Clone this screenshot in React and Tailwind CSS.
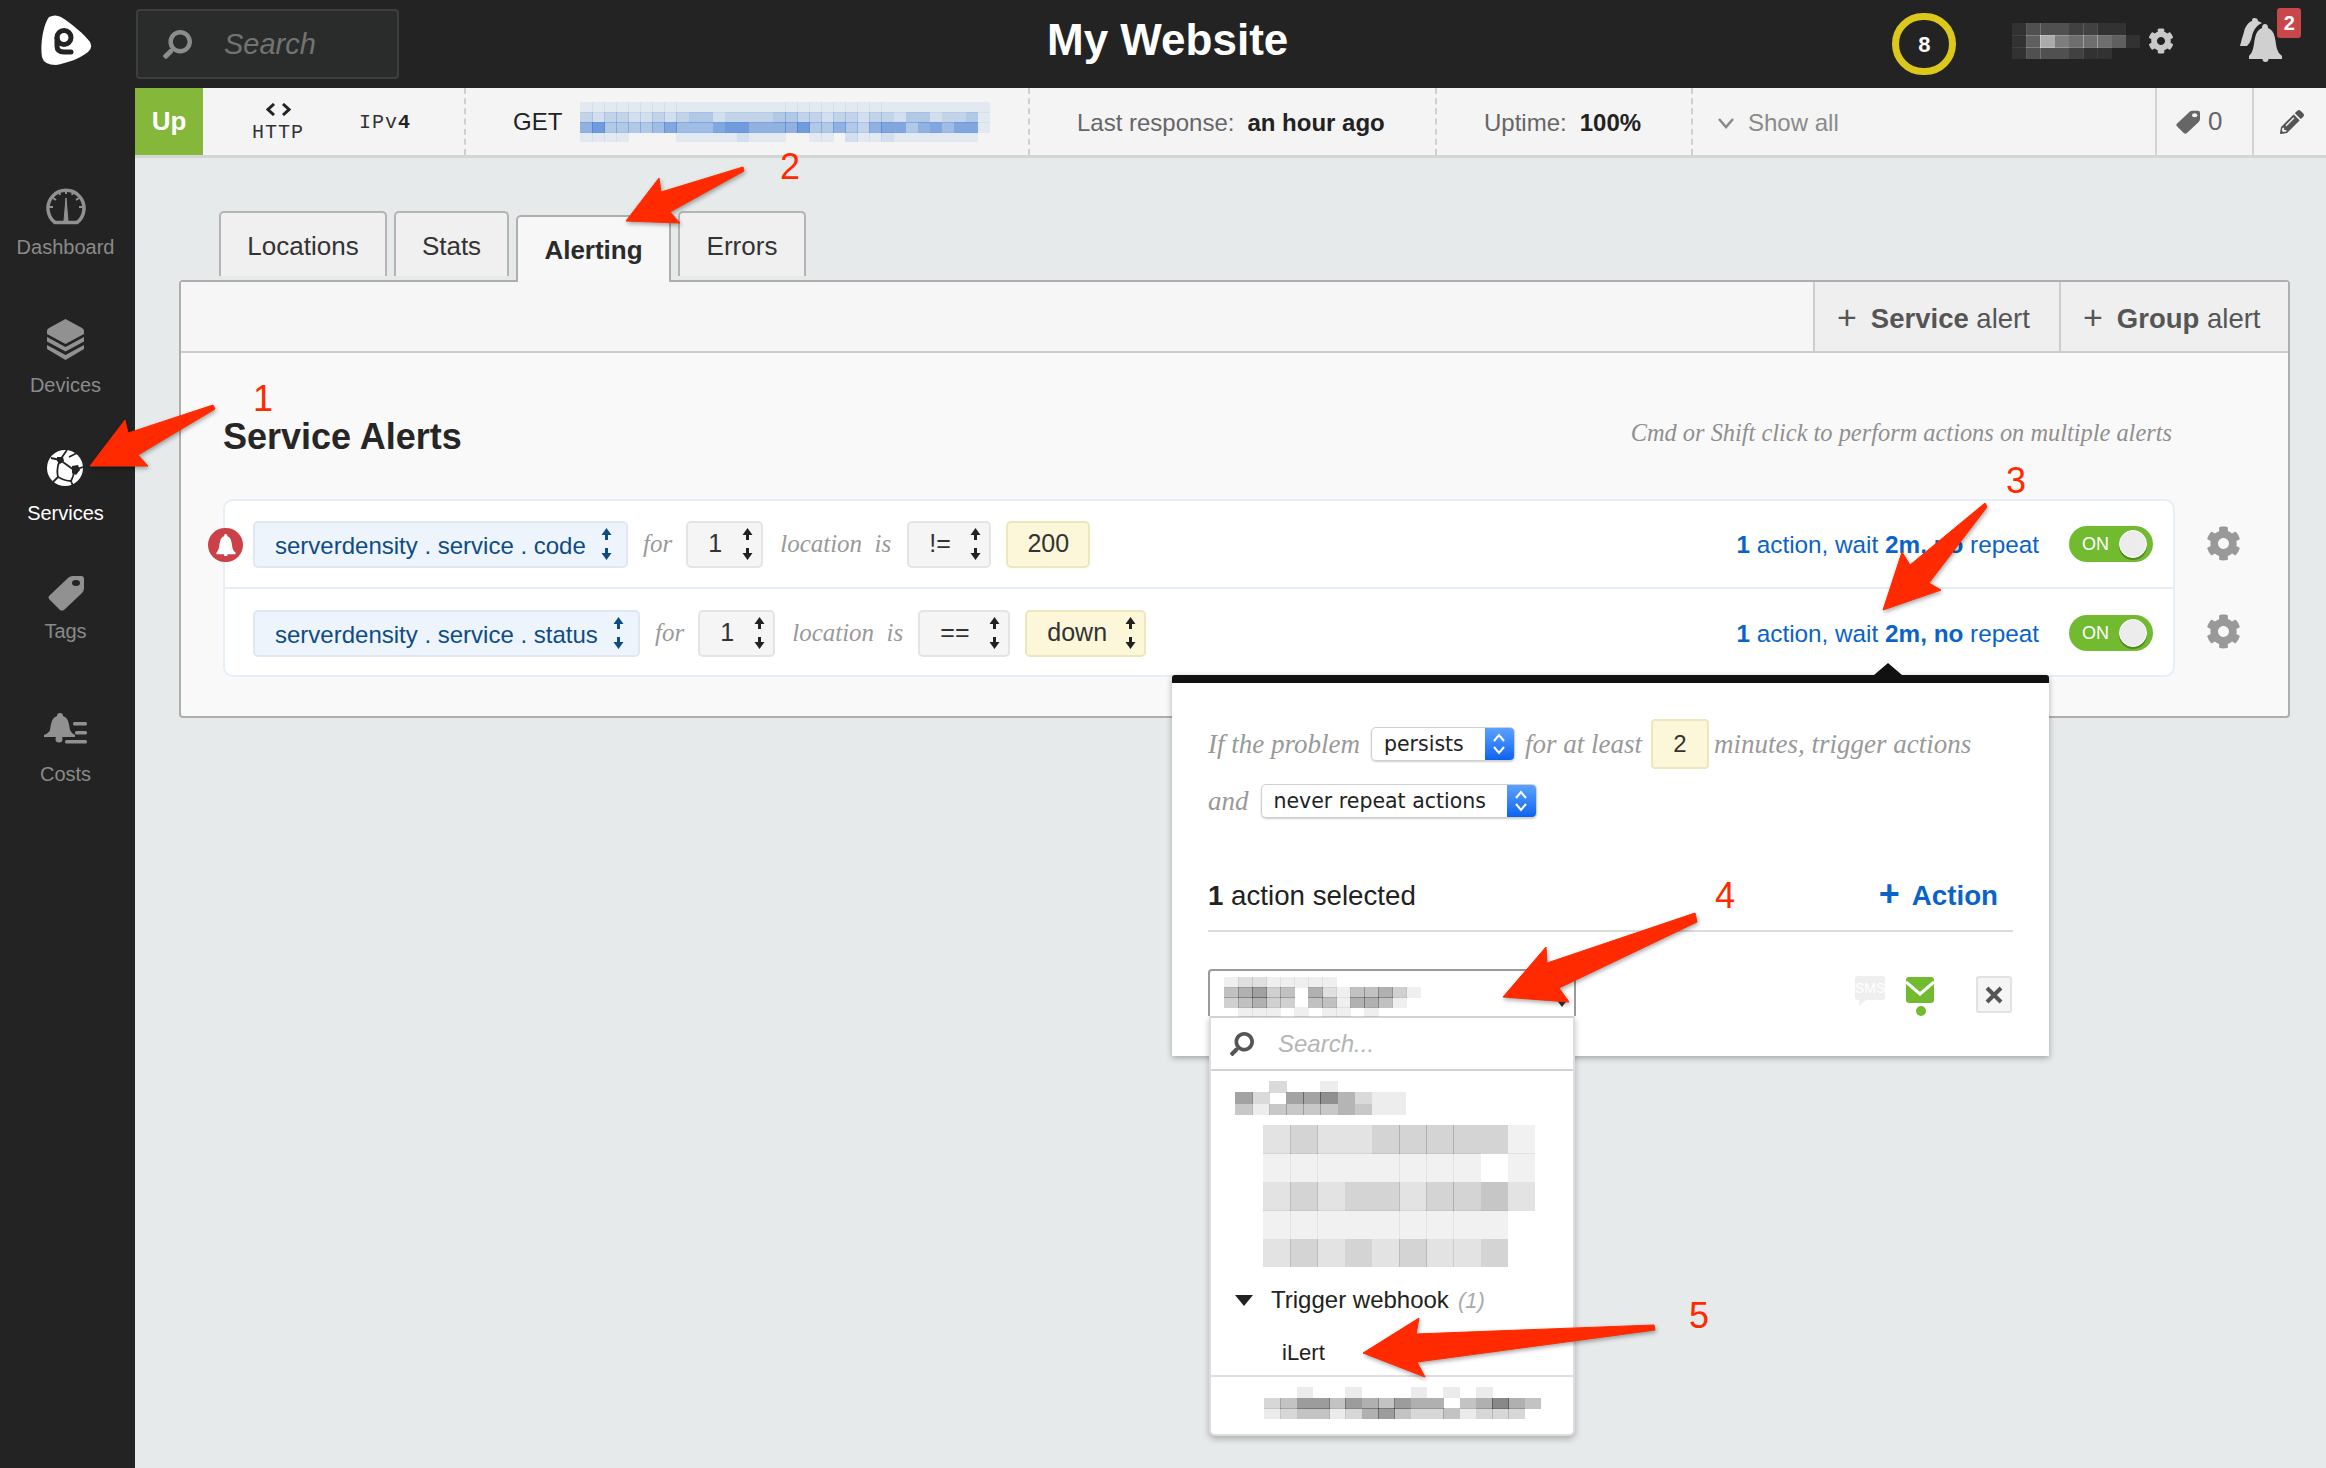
import React from 'react';
import { FaCog, FaSearch, FaPencilAlt } from 'react-icons/fa';

const URL_ROWS = [
  '1111111111111111111111111111111111',
  '3233223234423333443323323324423341',
  '6844445755578866668446436774675771',
  '1111000011111211100110211211111110',
];
const NAME_ROWS = [
  '133322110',
  '149655541',
  '133321100',
];
const SELECT_ROWS = [
  '12211111000000000',
  '45634052144531000',
  '34533044155410000',
  '01110101101000000',
];
const GROUP_ROWS = [
  '00200100000',
  '52055642110',
  '31333343110',
];
const BLOCK_ROWS = [
  '2322333331',
  '1111111101',
  '2323323342',
  '1111111110',
  '2323232230',
];
const FOOT_ROWS = [
  '00100100010101000',
  '23553543544034643',
  '12331245322312220',
];

// pixelated censor blocks, drawn from a table of opacities
const Pix = ({ rows, w, h, color = '#000', max = 0.5 }) => {
  const cw = w / rows[0].length;
  const ch = h / rows.length;
  return (
    <svg width={w} height={h} className="block" shapeRendering="crispEdges">
      {rows.map((r, y) =>
        r.split('').map((v, x) => (
          <rect key={`${x}-${y}`} x={x * cw} y={y * ch} width={cw + 0.5} height={ch + 0.5} fill={color} opacity={(Number(v) / 9) * max} />
        ))
      )}
    </svg>
  );
};

const UpDown = ({ color = '#222', h = 32 }) => (
  <svg width="11" height={h} viewBox={`0 0 11 ${h}`} className="shrink-0">
    <path d={`M5.5 0 L10.5 7 H7 V12 H4 V7 H.5 Z M5.5 ${h} L10.5 ${h - 7} H7 V${h - 12} H4 V${h - 7} H.5 Z`} fill={color} />
  </svg>
);

const DashIcon = () => (
  <svg width="40" height="38" viewBox="0 0 40 38" fill="none" stroke="#919191">
    <path d="M9 35.5 A18 18 0 1 1 31 35.5 Z" strokeWidth="3.5" strokeLinejoin="round" />
    <path d="M20 11 L22 34 H18 Z" fill="#919191" strokeWidth="1" />
    <path d="M20 3 V7 M13 5 L14 8 M27 5 L26 8 M7 11 L10 13 M33 11 L30 13 M3 20 H7 M37 20 H33" strokeWidth="2" />
  </svg>
);

const StackIcon = () => (
  <svg width="37" height="41" viewBox="0 0 37 41" fill="#919191">
    <path d="M18.5 0 L35 9 Q37 10 37 12 V15 L18.5 25 L0 15 V12 Q0 10 2 9 Z" />
    <path d="M0 18 L18.5 28 L37 18 V22.5 L18.5 32.5 L0 22.5 Z" />
    <path d="M0 26 L18.5 36 L37 26 V30 L18.5 41 L0 30 Z" />
  </svg>
);

const BallIcon = () => (
  <svg width="36" height="36" viewBox="0 0 36 36">
    <circle cx="18" cy="18" r="18" fill="#fff" />
    <path d="M13 10 L20 0 M13 10 L4 8 M13 10 Q9 18 11 27 M13 10 L27 20 M27 20 Q27 26 24 31 M11 27 Q18 31 24 31 M11 27 L6 32 M24 31 L26 36 M27 20 L36 17 M22 7 L30 3" fill="none" stroke="#232323" strokeWidth="1.8" />
    <path d="M10 7 L16 7 L17 11 L13 14 L10 11 Z" fill="#232323" />
    <path d="M25 16 L31 15 L33 20 L29 25 L25 23 Z" fill="#232323" />
  </svg>
);

const TagIcon = ({ w = 36, h = 36, color = '#919191', hole = '#232323' }) => (
  <svg width={w} height={h} viewBox="0 0 36 36">
    <path d="M1 21 L20 3 Q22 1 25 1 H33 Q36 1 36 4 V13 Q36 16 34 18 L16 35 Q14 36 12 35 L1 24 Q0 22 1 21 Z" fill={color} />
    <ellipse cx="28" cy="8" rx="4" ry="3" fill={hole} />
  </svg>
);

const CostIcon = () => (
  <svg width="44" height="32" viewBox="0 0 44 32" fill="#919191">
    <path d="M16 0 Q19 0 19 3 C25 5 25 12 26 17 Q27 20 31 22 V24 H0 V22 Q5 20 6 17 C7 12 7 5 13 3 Q13 0 16 0 Z" />
    <circle cx="15" cy="26" r="3.5" />
    <rect x="29" y="9" width="14" height="3.5" rx="1.5" />
    <rect x="31" y="18" width="12" height="3.5" rx="1.5" />
    <rect x="21" y="27" width="22" height="3.5" rx="1.5" />
  </svg>
);

const BellShape = ({ color }) => (
  <path d="M16 0 Q19 0 19 4 C27 7 26 18 28 25 Q29 29 33 32 V35 H0 V32 Q3 29 4 25 C6 18 5 7 13 4 Q13 0 16 0 Z" fill={color} />
);

const Logo = () => (
  <svg width="51" height="50" viewBox="0 0 51 50">
    <path d="M8 2 Q14 -1 20 2 C30 8 44 20 49 27 Q52 33 47 37 C38 44 26 48 15 50 Q3 50 1 42 C-1 30 2 10 8 2 Z" fill="#fff" />
    <circle cx="23" cy="22.5" r="7" fill="none" stroke="#232323" strokeWidth="5" />
    <path d="M16 23 V31 Q16 37 23 37 H30" fill="none" stroke="#232323" strokeWidth="5" strokeLinecap="round" />
  </svg>
);

const NavItem = ({ icon, label, active, iconH, mt, gap }) => (
  <div className={`flex flex-col items-center ${mt}`}>
    <div className={`flex items-center justify-center ${iconH}`}>{icon}</div>
    <span className={`text-[20px] leading-[24px] ${gap} ${active ? 'text-white' : 'text-[#8a8a8a]'}`}>{label}</span>
  </div>
);

const Sidebar = () => (
  <aside className="w-[135px] shrink-0 bg-[#232323] flex flex-col items-center pr-[4px]">
    <div className="mt-[15px] ml-[1px]"><Logo /></div>
    <NavItem icon={<DashIcon />} label="Dashboard" iconH="h-[38px]" mt="mt-[122px]" gap="mt-[10px]" />
    <NavItem icon={<StackIcon />} label="Devices" iconH="h-[41px]" mt="mt-[60px]" gap="mt-[13px]" />
    <NavItem icon={<BallIcon />} label="Services" active iconH="h-[36px]" mt="mt-[53px]" gap="mt-[15px]" />
    <NavItem icon={<TagIcon />} label="Tags" iconH="h-[36px]" mt="mt-[50px]" gap="mt-[8px]" />
    <NavItem icon={<CostIcon />} label="Costs" iconH="h-[32px]" mt="mt-[70px]" gap="mt-[17px]" />
  </aside>
);

const Header = () => (
  <header className="h-[88px] bg-[#232323] flex items-center relative">
    <div className="ml-[1px] w-[263px] h-[70px] rounded-[4px] border-2 border-[#3d3f3f] bg-[#2a2c2c] flex items-center pl-[25px]">
      <FaSearch className="text-[#8c8c8c] -scale-x-100" size={29} />
      <span className="ml-[32px] mt-[2px] italic text-[29px] text-[#737373]">Search</span>
    </div>
    <h1 className="ml-[648px] mt-[-9px] text-[44px] font-bold text-white whitespace-nowrap">My Website</h1>
    <div className="ml-[604px] w-[64px] h-[62px] rounded-full border-[7px] border-[#dcc81a] flex items-center justify-center text-white font-bold text-[22px]">8</div>
    <div className="ml-[56px] mt-[-6px]"><Pix rows={NAME_ROWS} w={128} h={36} color="#fff" max={0.62} /></div>
    <FaCog className="ml-[8px] mt-[-6px] text-[#c9c9c9]" size={26} />
    <div className="relative ml-[65px] mt-[-8px] w-[46px] h-[44px]">
      <svg width="46" height="44" viewBox="0 0 46 44">
        <path d="M15 0 Q19 0 19 3 L23 5 C16 8 14 14 13 18 C12 24 9 27 8 28 H1 Q3 20 5 14 C6 8 10 4 13 3 Q13 0 15 0 Z" fill="#d0d0d0" />
        <g transform="translate(10 6)"><BellShape color="#d0d0d0" /></g>
        <circle cx="26.5" cy="41" r="3" fill="#d0d0d0" />
      </svg>
      <span className="absolute left-[38px] top-[-10px] w-[24px] h-[30px] rounded-[3px] bg-[#c8474a] text-white font-bold text-[20px] leading-[30px] text-center">2</span>
    </div>
  </header>
);

const Sep = ({ className = '' }) => (
  <div className={`w-0 h-full border-l-2 border-dashed border-[#cfcfcf] shrink-0 ${className}`} />
);

const StatusBar = () => (
  <div className="h-[70px] bg-[#f4f4f4] border-b-[3px] border-[#d4d6d6] flex items-stretch text-[24px] text-[#666]">
    <div className="w-[68px] shrink-0 bg-[#84b73a] text-white font-bold text-[26px] flex items-center justify-center">Up</div>
    <div className="w-[261px] shrink-0 flex items-center font-['Liberation_Mono',monospace] text-[#333]">
      <div className="ml-[49px] flex flex-col items-center w-[52px] mt-[3px]">
        <svg width="25" height="13" viewBox="0 0 25 13" fill="none" stroke="#222" strokeWidth="3"><path d="M8 1 L2 6.5 L8 12 M17 1 L23 6.5 L17 12" /></svg>
        <span className="text-[20px] leading-[22px] tracking-[1px] mt-[6px]">HTTP</span>
      </div>
      <span className="ml-[55px] mt-[3px] text-[20px] tracking-[1px]">IPv<b className="text-[#222]">4</b></span>
    </div>
    <Sep />
    <div className="w-[562px] shrink-0 flex items-center">
      <span className="ml-[47px] mt-[1px] text-[#222]">GET</span>
      <div className="ml-[18px]"><Pix rows={URL_ROWS} w={410} h={40} color="#3b78d0" max={0.8} /></div>
    </div>
    <Sep />
    <div className="w-[405px] shrink-0 flex items-center pl-[47px] pt-[2px] whitespace-nowrap">
      <span>Last response:</span>
      <b className="ml-[13px] text-[#222]">an hour ago</b>
    </div>
    <Sep />
    <div className="w-[254px] shrink-0 flex items-center pl-[47px] pt-[2px] whitespace-nowrap">
      <span>Uptime:</span>
      <b className="ml-[13px] text-[#222]">100%</b>
    </div>
    <Sep />
    <div className="flex-1 flex items-center pl-[24px] pt-[2px] text-[#8a8a8a]">
      <svg width="18" height="12" viewBox="0 0 18 12" fill="none" stroke="#8a8a8a" strokeWidth="2.5"><path d="M2 2 L9 10 L16 2" /></svg>
      <span className="ml-[13px]">Show all</span>
    </div>
    <div className="w-[97px] border-l-2 border-[#d4d4d4] flex items-center pl-[19px] text-[#666] text-[26px]">
      <TagIcon w={24} h={24} color="#666" hole="#f4f4f4" />
      <span className="ml-[8px]">0</span>
    </div>
    <div className="w-[74px] border-l-2 border-[#d4d4d4] flex items-center pl-[26px]">
      <FaPencilAlt className="text-[#555]" size={24} />
    </div>
  </div>
);

const Tab = ({ label, width, active }) =>
  active ? (
    <div className={`${width} h-[67px] mt-[4px] pt-[2px] relative z-10 mb-[-6px] rounded-t-[5px] border-2 border-b-0 border-[#aeaeae] bg-[#f7f7f7] font-bold text-[#2b2b2b] text-[26px] flex items-center justify-center`}>{label}</div>
  ) : (
    <div className={`${width} h-[65px] pt-[3px] rounded-t-[5px] border-2 border-b-0 border-[#b4b4b4] bg-[#f0f0f0] text-[#333] text-[26px] flex items-center justify-center`}>{label}</div>
  );

const Box = ({ className = '', children }) => (
  <div className={`h-[47px] rounded-[5px] border-2 flex items-center shrink-0 ${className}`}>{children}</div>
);

const Metric = ({ name, width }) => (
  <Box className={`${width} bg-[#eef4fb] border-[#dfe8f2] pl-[20px] pr-[14px] justify-between text-[#0f4c86]`}>
    <span className="text-[24px] mt-[3px] whitespace-nowrap">{name}</span>
    <UpDown color="#0f4c86" />
  </Box>
);

const Gray = ({ children, width }) => (
  <Box className={`${width} bg-[#f5f5f5] border-[#e4e4e4] justify-between pl-[20px] pr-[8px] text-[#333] text-[25px]`}>
    <span>{children}</span>
    <UpDown />
  </Box>
);

const Word = ({ children, className = '' }) => (
  <span className={`font-['Liberation_Serif',serif] italic text-[#999] whitespace-nowrap ${className}`}>{children}</span>
);

const Toggle = () => (
  <div className="w-[84px] h-[36px] rounded-full bg-[#72bb31] relative flex items-center pl-[13px] text-white text-[18px]">
    ON
    <span className="absolute left-[50px] top-[4px] w-[28px] h-[28px] rounded-full bg-[#ececec] border border-white shadow-[0_2px_0_#4f8a1c]" />
  </div>
);

const AlertRow = ({ children, divider }) => (
  <div className={`h-[88px] flex items-center pl-[28px] relative ${divider ? 'border-b-2 border-[#e6eef6]' : ''}`}>
    {children}
    <div className="ml-auto mr-[20px] flex items-center">
      <span className="text-[24.3px] mt-[2px] text-[#0a63c9] whitespace-nowrap"><b>1</b> action, wait <b>2m,</b> <b>no</b> repeat</span>
      <div className="ml-[30px]"><Toggle /></div>
    </div>
    <FaCog className="absolute left-[1981px] top-[25px] text-[#999]" size={35} />
  </div>
);

const Panel = () => (
  <section className="ml-[44px] w-[2111px] h-[438px] mt-[4px] rounded-[4px] border-2 border-[#aeaeae] bg-[#f9f9f9]">
    <div className="h-[71px] border-b-2 border-[#cdcdcd] bg-[#f6f6f6] flex justify-end text-[#555] text-[27.5px]">
      <div className="w-[246px] pt-[5px] border-l-2 border-[#cdcdcd] bg-[#efefef] flex items-center pl-[22px] whitespace-nowrap">
        <span className="text-[34px] leading-none mr-[14px] mt-[-5px]">+</span><b>Service</b>&nbsp;alert
      </div>
      <div className="w-[229px] pt-[5px] border-l-2 border-[#cdcdcd] bg-[#efefef] flex items-center pl-[22px] whitespace-nowrap">
        <span className="text-[34px] leading-none mr-[14px] mt-[-5px]">+</span><b>Group</b>&nbsp;alert
      </div>
    </div>
    <div className="h-[146px] pt-[19px] pl-[42px] pr-[116px] flex items-center justify-between">
      <h2 className="text-[36px] font-bold text-[#262626] mt-[2px]">Service Alerts</h2>
      <span className="font-['Liberation_Serif',serif] italic text-[#8f8f8f] text-[24.4px] mt-[-4px]">Cmd or Shift click to perform actions on multiple alerts</span>
    </div>
    <div className="ml-[42px] w-[1952px] h-[178px] rounded-[10px] border-2 border-[#e6eef6] bg-white relative">
      <AlertRow divider>
        <span className="absolute left-[-17px] top-[27px] w-[35px] h-[34px] rounded-full bg-[#cc4047] flex items-center justify-center">
          <svg width="20" height="22" viewBox="0 0 33 38"><BellShape color="#fff" /><circle cx="16" cy="36" r="3" fill="#fff" /></svg>
        </span>
        <Metric name="serverdensity . service . code" width="w-[375px]" />
        <Word className="ml-[15px] text-[25px]">for</Word>
        <Gray width="w-[77px] ml-[14px]">1</Gray>
        <Word className="ml-[17px] text-[25px]">location&nbsp; is</Word>
        <Gray width="w-[84px] ml-[16px]">!=</Gray>
        <Box className="w-[84px] ml-[15px] bg-[#fcf7d8] border-[#eee6bd] justify-center text-[25px] text-[#333]">200</Box>
      </AlertRow>
      <AlertRow>
        <Metric name="serverdensity . service . status" width="w-[387px]" />
        <Word className="ml-[15px] text-[25px]">for</Word>
        <Gray width="w-[77px] ml-[14px]">1</Gray>
        <Word className="ml-[17px] text-[25px]">location&nbsp; is</Word>
        <Gray width="w-[92px] ml-[15px]">==</Gray>
        <Box className="w-[121px] ml-[15px] bg-[#fcf7d8] border-[#eee6bd] justify-between pl-[20px] pr-[8px] text-[25px] text-[#333]">down<UpDown /></Box>
      </AlertRow>
    </div>
  </section>
);

const BlueSelect = ({ label, className }) => (
  <div className={`h-[34px] rounded-[5px] border border-[#cfcfcf] shadow-[0_1px_2px_rgba(0,0,0,0.2)] flex items-center justify-between overflow-hidden font-['DejaVu_Sans',sans-serif] text-[20.5px] text-[#222] shrink-0 ${className}`}>
    <span className="pl-[12px] whitespace-nowrap">{label}</span>
    <span className="w-[29px] h-full bg-gradient-to-b from-[#5aa2ff] to-[#0a62f0] flex items-center justify-center">
      <svg width="14" height="24" viewBox="0 0 14 24" fill="none" stroke="#fff" strokeWidth="2"><path d="M2 9 L7 3 L12 9 M2 15 L7 21 L12 15" /></svg>
    </span>
  </div>
);

const Popover = () => (
  <div className="absolute left-[1172px] top-[675px] w-[877px] h-[381px] bg-white border-t-[8px] border-[#111] rounded-t-[3px] shadow-[0_2px_6px_rgba(0,0,0,0.3)] z-20">
    <div className="absolute left-[702px] top-[-20px] w-0 h-0 border-x-[14px] border-x-transparent border-b-[12px] border-b-[#111]" />
    <div className="pl-[36px] pr-[36px]">
      <div className="flex items-center h-[50px] mt-[36px]">
        <Word className="text-[27px]">If the problem</Word>
        <BlueSelect label="persists" className="w-[144px] ml-[11px]" />
        <Word className="text-[27px] ml-[10px]">for at least</Word>
        <div className="ml-[9px] w-[58px] h-[50px] rounded-[4px] bg-[#fcf7d8] border-2 border-[#eee6bd] flex items-center justify-center text-[24px] text-[#333]">2</div>
        <Word className="text-[27px] ml-[5px]">minutes, trigger actions</Word>
      </div>
      <div className="flex items-center h-[34px] mt-[15px]">
        <Word className="text-[27px]">and</Word>
        <BlueSelect label="never repeat actions" className="w-[276px] ml-[12px]" />
      </div>
      <div className="flex items-center justify-between h-[50px] mt-[53px] text-[27.7px] text-[#222]">
        <span><b>1</b> action selected</span>
        <span className="text-[#0a63c9] font-bold mr-[15px] flex items-center"><span className="text-[36px] leading-none mr-[12px] mt-[-4px]">+</span>Action</span>
      </div>
      <div className="h-[2px] bg-[#dcdcdc] mt-[9px]" />
      <div className="relative flex items-center h-[84px]">
        <div className="absolute left-[647px] top-[44px] w-[30px] h-[30px]">
          <div className="w-[30px] h-[24px] rounded-[3px] bg-[#efefef] text-white text-[14px] leading-[24px] text-center">SMS</div>
          <div className="w-0 h-0 ml-[4px] border-r-[7px] border-r-transparent border-t-[6px] border-t-[#efefef]" />
        </div>
        <svg className="absolute left-[698px] top-[45px]" width="28" height="26" viewBox="0 0 28 26">
          <rect width="28" height="26" rx="3" fill="#72bb31" />
          <path d="M0 5 L14 17 L28 5" fill="none" stroke="#fff" strokeWidth="3" />
        </svg>
        <span className="absolute left-[708px] top-[74px] w-[10px] h-[10px] rounded-full bg-[#72bb31]" />
        <div className="absolute left-[768px] top-[44px] w-[36px] h-[37px] rounded-[3px] border-2 border-[#e2e2e2] bg-[#f5f5f5] flex items-center justify-center">
          <svg width="20" height="20" viewBox="0 0 20 20" stroke="#555" strokeWidth="4"><path d="M3 3 L17 17 M17 3 L3 17" /></svg>
        </div>
      </div>
    </div>
  </div>
);

const Dropdown = () => (
  <div className="absolute left-[1208px] top-[969px] w-[368px] z-30">
    <div className="h-[47px] rounded-t-[4px] border-2 border-b-0 border-[#9a9a9a] bg-white relative pl-[14px] pt-[6px]">
      <Pix rows={SELECT_ROWS} w={238} h={40} max={0.55} />
      <span className="absolute right-[6px] top-[28px] w-0 h-0 border-x-[6px] border-x-transparent border-t-[8px] border-t-[#333]" />
    </div>
    <div className="w-[366px] ml-[1px] bg-white border-x-2 border-b-2 border-[#ddd] rounded-b-[6px] shadow-[0_3px_6px_rgba(0,0,0,0.25)]">
      <div className="h-[55px] border-t-2 border-b-2 border-[#d2d2d2] flex items-center pl-[19px]">
        <FaSearch className="text-[#555] -scale-x-100" size={24} />
        <span className="ml-[24px] italic text-[24px] text-[#b5b5b5]">Search...</span>
      </div>
      <div className="pt-[10px] pl-[24px]">
        <Pix rows={GROUP_ROWS} w={188} h={34} max={0.65} />
        <div className="ml-[28px] mt-[10px]"><Pix rows={BLOCK_ROWS} w={272} h={142} max={0.5} /></div>
        <div className="flex items-center mt-[18px] h-[30px] text-[24px] text-[#222] whitespace-nowrap">
          <span className="w-0 h-0 border-x-[9px] border-x-transparent border-t-[11px] border-t-[#222]" />
          <span className="ml-[18px]">Trigger webhook</span>
          <span className="ml-[9px] italic text-[#aaa] text-[22px]">(1)</span>
        </div>
        <div className="mt-[21px] ml-[47px] h-[28px] text-[22px] text-[#222]">iLert</div>
      </div>
      <div className="mt-[11px] border-t-2 border-[#dedede] h-[59px] pl-[53px] pt-[10px]">
        <Pix rows={FOOT_ROWS} w={277} h={32} max={0.7} />
      </div>
    </div>
  </div>
);

const ARROWS = [
  '90,466 125,420 128,433 213,405 215,409 138,455 148,466',
  '626,221 659,178 661,192 743,167 744,171 670,212 680,223',
  '1883,610 1902,552 1910,565 1985,503 1987,507 1929,583 1941,590',
  '1503,997 1546,947 1547,963 1695,913 1697,922 1559,988 1569,1002',
  '1363,1353 1419,1318 1416,1334 1654,1325 1655,1330 1417,1362 1425,1377',
];
const NUMBERS = [
  { n: '1', pos: 'left-[253px] top-[379px]' },
  { n: '2', pos: 'left-[780px] top-[147px]' },
  { n: '3', pos: 'left-[2006px] top-[461px]' },
  { n: '4', pos: 'left-[1715px] top-[876px]' },
  { n: '5', pos: 'left-[1689px] top-[1296px]' },
];

const Annotations = () => (
  <>
    <svg className="absolute inset-0 z-40 pointer-events-none drop-shadow-[1px_2px_2px_rgba(0,0,0,0.35)]" width="2326" height="1468">
      {ARROWS.map((p) => (
        <polygon key={p} points={p} fill="#ff2a00" stroke="#ff2a00" strokeLinejoin="round" />
      ))}
    </svg>
    {NUMBERS.map(({ n, pos }) => (
      <span key={n} className={`absolute z-40 text-[36px] leading-[40px] text-[#ff2a00] ${pos}`}>{n}</span>
    ))}
  </>
);

export default function App() {
  return (
    <div className="relative w-[2326px] h-[1468px] overflow-hidden flex font-['Liberation_Sans',Arial,sans-serif] bg-[#e6eaeb]">
      <Sidebar />
      <main className="flex-1 flex flex-col min-w-0">
        <Header />
        <StatusBar />
        <div className="mt-[53px] ml-[84px] flex gap-[7px] h-[65px] items-start">
          <Tab label="Locations" width="w-[168px]" />
          <Tab label="Stats" width="w-[115px]" />
          <Tab label="Alerting" width="w-[155px]" active />
          <Tab label="Errors" width="w-[128px]" />
        </div>
        <Panel />
      </main>
      <Popover />
      <Dropdown />
      <Annotations />
    </div>
  );
}
